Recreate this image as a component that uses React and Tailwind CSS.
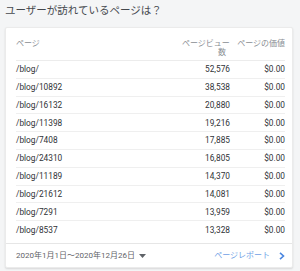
import React from "react";

const rows = [
  ["/blog/", "52,576"],
  ["/blog/10892", "38,538"],
  ["/blog/16132", "20,880"],
  ["/blog/11398", "19,216"],
  ["/blog/7408", "17,885"],
  ["/blog/24310", "16,805"],
  ["/blog/11189", "14,370"],
  ["/blog/21612", "14,081"],
  ["/blog/7291", "13,959"],
  ["/blog/8537", "13,328"],
];

export default function App() {
  return (
    <div
      className="w-[300px] h-[271px] bg-[#f4f5f6] overflow-hidden"
      style={{ fontFamily: 'Roboto, "Noto Sans CJK JP", sans-serif' }}
    >
      <div className="h-[27px] pl-[5px] pt-[4px] text-[10.5px] leading-[13px] text-[#44484d]">
        ユーザーが訪れているページは？
      </div>
      <div className="ml-[5px] w-[288px] h-[241px] bg-white rounded-[2px] border border-[#ebebeb] shadow-[0_1px_2px_rgba(0,0,0,0.12)] flex flex-col">
        <div className="pl-[10px] pr-[7px]">
          <div className="grid grid-cols-[1fr_50px_55px] h-[33px] pt-[11px] border-b border-[#ececec] text-[8px] leading-[9px] text-[#8a8e93]">
            <div>ページ</div>
            <div className="flex flex-col pl-[2px]">
              <div className="whitespace-nowrap">ページビュー</div>
              <div className="text-right pr-[4px]">数</div>
            </div>
            <div className="text-right whitespace-nowrap">ページの価値</div>
          </div>
          {rows.map(([p, v], i) => (
            <div
              key={p}
              className={
                "grid grid-cols-[1fr_50px_55px] h-[17.8px] items-center text-[8.3px] text-[#2f3236] " +
                (i < rows.length - 1 ? "border-b border-[#efefef]" : "")
              }
            >
              <div>{p}</div>
              <div className="text-right">{v}</div>
              <div className="text-right">$0.00</div>
            </div>
          ))}
        </div>
        <div className="mt-auto h-[24px] border-t border-[#e6e6e6] flex items-center pl-[10px] pr-[7px] text-[8px] text-[#5f6368]">
          <span>2020年1月1日～2020年12月26日</span>
          <svg width="7" height="4" viewBox="0 0 7 4" className="ml-[4px]">
            <path d="M0 0 L7 0 L3.5 4 Z" fill="#5f6368" />
          </svg>
          <span className="ml-auto text-[#6f9fe6]">ページレポート</span>
          <svg width="6" height="8" viewBox="0 0 6 8" className="ml-[9px]">
            <path d="M1 0.8 L4.5 4 L1 7.2" fill="none" stroke="#4a86e0" strokeWidth="1.6" />
          </svg>
        </div>
      </div>
    </div>
  );
}
